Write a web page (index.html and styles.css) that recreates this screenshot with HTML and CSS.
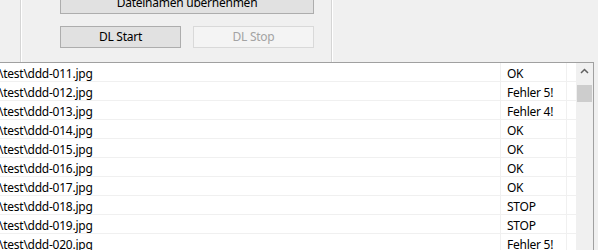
FILE: index.html
```html
<!DOCTYPE html>
<html lang="de">
<head>
    <meta charset="UTF-8">
    <title>Download</title>
    <link rel="stylesheet" href="styles.css">
</head>
<body>
    <div class="panel">
        <div class="group">
            <button class="btn wide">Dateinamen übernehmen</button>
            <div class="btn-row">
                <button class="btn">DL Start</button>
                <button class="btn" disabled>DL Stop</button>
            </div>
        </div>
    </div>

    <div class="list">
        <div class="rows">
            <div class="row"><span class="path">\test\ddd-011.jpg</span><span class="status">OK</span></div>
            <div class="row"><span class="path">\test\ddd-012.jpg</span><span class="status">Fehler 5!</span></div>
            <div class="row"><span class="path">\test\ddd-013.jpg</span><span class="status">Fehler 4!</span></div>
            <div class="row"><span class="path">\test\ddd-014.jpg</span><span class="status">OK</span></div>
            <div class="row"><span class="path">\test\ddd-015.jpg</span><span class="status">OK</span></div>
            <div class="row"><span class="path">\test\ddd-016.jpg</span><span class="status">OK</span></div>
            <div class="row"><span class="path">\test\ddd-017.jpg</span><span class="status">OK</span></div>
            <div class="row"><span class="path">\test\ddd-018.jpg</span><span class="status">STOP</span></div>
            <div class="row"><span class="path">\test\ddd-019.jpg</span><span class="status">STOP</span></div>
            <div class="row"><span class="path">\test\ddd-020.jpg</span><span class="status">Fehler 5!</span></div>
        </div>
        <div class="scrollbar">
            <div class="arrow up">
                <svg width="9" height="6" viewBox="0 0 9 6"><path d="M1 5 L4.5 1.5 L8 5" fill="none" stroke="#606060" stroke-width="1.5"/></svg>
            </div>
            <div class="thumb"></div>
            <div class="track"></div>
            <div class="arrow down">
                <svg width="9" height="6" viewBox="0 0 9 6"><path d="M1 1 L4.5 4.5 L8 1" fill="none" stroke="#606060" stroke-width="1.5"/></svg>
            </div>
        </div>
    </div>
</body>
</html>
```

FILE: styles.css
```css
body {
    margin: 0;
    background: #f0f0f0;
    font-family: "Noto Sans", "Open Sans", sans-serif;
    font-size: 12px;
    letter-spacing: -0.25px;
    color: #000;
    overflow: hidden;
    height: 250px;
}
.panel {
    display: flex;
    align-items: flex-start;
    height: 62px;
    padding-left: 20px;
}
.group {
    width: 312px;
    height: 71px;
    margin-top: -9px;
    padding-left: 39px;
    box-sizing: border-box;
    border-left: 1px solid #d5d5d5;
    border-right: 1px solid #d5d5d5;
    box-shadow: inset 1px 0 0 #fff, 1px 0 0 #fff;
}
.btn {
    display: block;
    font-family: inherit;
    font-size: 12px;
    letter-spacing: inherit;
    color: #000;
    background: #e1e1e1;
    border: 1px solid #adadad;
    padding: 0;
    height: 23px;
    line-height: 20px;
}
.btn.wide {
    width: 254px;
}
.btn-row {
    display: flex;
    gap: 12px;
    margin-top: 12px;
}
.btn-row .btn {
    width: 121px;
    height: 22px;
}
.btn:disabled {
    background: #f4f4f4;
    border-color: #d9d9d9;
    color: #a3a3a3;
}
.list {
    display: flex;
    width: 594px;
    height: 200px;
    box-sizing: border-box;
    background: #fff;
    border-top: 1px solid #a0a0a0;
    border-right: 1px solid #a0a0a0;
}
.rows {
    flex: 1;
}
.row {
    display: flex;
    height: 19px;
    box-sizing: border-box;
    border-bottom: 1px solid #f0f0f0;
    line-height: 18px;
}
.path,
.status {
    padding-top: 2px;
    height: 18px;
    box-sizing: border-box;
}
.path {
    width: 502px;
    margin-left: -1px;
    border-right: 1px solid #f0f0f0;
    white-space: nowrap;
}
.status {
    width: 59px;
    padding-left: 6px;
    border-right: 1px solid #f0f0f0;
    box-sizing: content-box;
    height: 16px;
}
.scrollbar {
    width: 17px;
    display: flex;
    flex-direction: column;
    background: #f0f0f0;
}
.arrow {
    height: 17px;
    display: flex;
    align-items: center;
    justify-content: center;
}
.thumb {
    height: 17px;
    margin: 5px 1px 0;
    background: #cdcdcd;
}
.track {
    height: 144px;
}
```
